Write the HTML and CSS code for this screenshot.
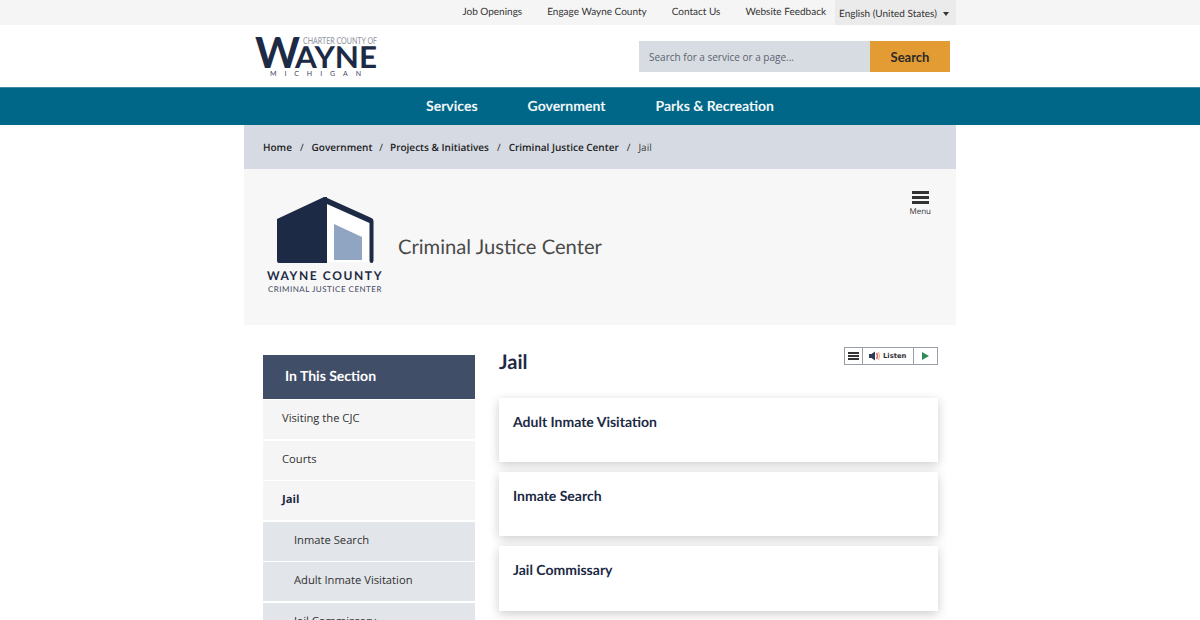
FILE: index.html
```html
<!DOCTYPE html>
<html>

<head>
    <title>Jail</title>
    <meta name="viewport" content="width=device-width, initial-scale=1.0">
    <link rel="stylesheet" href="styles.css">
</head>

<body>
    <div class="topbar">
        <div class="wrap topbar-inner">
            <a href="#">Job Openings</a>
            <a href="#">Engage Wayne County</a>
            <a href="#">Contact Us</a>
            <a href="#">Website Feedback</a>
            <div class="lang">English (United States) <span class="caret"></span></div>
        </div>
    </div>

    <header class="header">
        <div class="wrap header-inner">
            <svg class="logo" width="124" height="44" viewBox="0 0 124 44">
                <text class="logo-w" x="0" y="33" textLength="45" lengthAdjust="spacingAndGlyphs">W</text>
                <text class="logo-ayne" x="40" y="33" textLength="82" lengthAdjust="spacingAndGlyphs">AYNE</text>
                <text class="logo-charter" x="48" y="9" textLength="74" lengthAdjust="spacingAndGlyphs">CHARTER COUNTY OF</text>
                <text class="logo-michigan" x="15" y="41" textLength="91">MICHIGAN</text>
            </svg>
            <form class="search">
                <input class="search-input" type="text" placeholder="Search for a service or a page...">
                <button class="search-button" type="button">Search</button>
            </form>
        </div>
    </header>

    <nav class="mainnav">
        <a href="#">Services</a>
        <a href="#">Government</a>
        <a href="#">Parks &amp; Recreation</a>
    </nav>

    <div class="wrap">
        <div class="breadcrumb">
            <a href="#">Home</a><span class="sep">/</span>
            <a href="#">Government</a><span class="sep sep-narrow">/</span>
            <a href="#">Projects &amp; Initiatives</a><span class="sep">/</span>
            <a href="#">Criminal Justice Center</a><span class="sep">/</span>
            <span class="current">Jail</span>
        </div>

        <div class="section-head">
            <div class="cjc-logo">
                <svg width="100" height="68" viewBox="0 0 100 68">
                    <path d="M51 7 94 27V65H51Z" fill="#fff" />
                    <path d="M1 22 48 0Q49.500-.5 51 0V66H3Q1 66 1 64Z" fill="#1c2a45" />
                    <path d="M49 0 95.500 21Q97.500 22 97.500 24V63.500Q97.500 66 95.500 66 93.500 66 93.500 63.500V26L51 7Z" fill="#1c2a45" />
                    <path d="M58 27 86 40V63H58Z" fill="#8fa5c2" />
                </svg>
                <div class="cjc-name">WAYNE COUNTY</div>
                <div class="cjc-sub">CRIMINAL JUSTICE CENTER</div>
            </div>
            <div class="section-title">Criminal Justice Center</div>
            <div class="menu-toggle">
                <span class="bars"><i></i><i></i><i></i></span>
                <span>Menu</span>
            </div>
        </div>

        <div class="content">
            <aside class="sidebar">
                <div class="sidebar-title">In This Section</div>
                <a class="side-item" href="#">Visiting the CJC</a>
                <a class="side-item" href="#">Courts</a>
                <a class="side-item active" href="#">Jail</a>
                <a class="side-item sub" href="#">Inmate Search</a>
                <a class="side-item sub" href="#">Adult Inmate Visitation</a>
                <a class="side-item sub" href="#">Jail Commissary</a>
            </aside>

            <main class="main">
                <div class="main-head">
                    <h1>Jail</h1>
                    <div class="listen">
                        <span class="listen-menu"><i></i><i></i><i></i></span>
                        <span class="listen-label">
                            <svg width="12" height="10" viewBox="0 0 12 10">
                                <path d="M0 3H2.500L6 .5V9.500L2.500 7H0Z" fill="#2f3a55" />
                                <path d="M7.500 2Q9.500 5 7.500 8" fill="none" stroke="#d9705f" stroke-width="1.400" />
                                <path d="M9.500 1Q11.500 5 9.500 9" fill="none" stroke="#e9a58f" stroke-width="1" />
                            </svg>
                            Listen
                        </span>
                        <span class="listen-play"></span>
                    </div>
                </div>
                <div class="card">Adult Inmate Visitation</div>
                <div class="card">Inmate Search</div>
                <div class="card">Jail Commissary</div>
            </main>
        </div>
    </div>
</body>

</html>
```

FILE: styles.css
```css
html, body {
    height: 620px;
    overflow: hidden;
}

body {
    font-family: 'Lato', sans-serif;
    text-rendering: geometricPrecision;
    background-color: #fff;
    color: #1c2a45;
    margin: 0;
}

a {
    color: inherit;
    text-decoration: none;
}

.wrap {
    width: 712px;
    margin: 0 auto;
}

.topbar {
    background-color: #f5f5f5;
    height: 25px;
}

.topbar-inner {
    display: flex;
    justify-content: flex-end;
    align-items: center;
    height: 25px;
    font-size: 10px;
    color: #333;
}

.topbar-inner a {
    margin-right: 25px;
    padding-bottom: 2px;
}

.topbar-inner a:nth-child(4) {
    margin-right: 9px;
}

.lang {
    display: flex;
    align-items: center;
    height: 25px;
    width: 121px;
    padding: 2px 0 0 4px;
    box-sizing: border-box;
    background-color: #ebebeb;
    font-size: 10px;
    white-space: nowrap;
}

.caret {
    margin-left: 6px;
    border-left: 3.500px solid transparent;
    border-right: 3.500px solid transparent;
    border-top: 4px solid #333;
}

.header-inner {
    display: flex;
    justify-content: space-between;
    align-items: flex-start;
    height: 62px;
}

.logo {
    display: block;
    margin: 10px 0 0 11px;
}

.logo text {
    font-family: 'Lato', sans-serif;
}

.logo-w,
.logo-ayne {
    fill: #1c2a45;
    font-weight: 700;
}

.logo-w {
    font-size: 43px;
}

.logo-ayne {
    font-size: 30px;
}

.logo-charter {
    fill: #8b8f99;
    font-size: 9.500px;
}

.logo-michigan {
    fill: #3c4660;
    font-size: 7px;
}

.search {
    display: flex;
    margin: 16px 6px 0 0;
}

.search-input {
    width: 231px;
    height: 31px;
    padding: 0 10px;
    box-sizing: border-box;
    border: none;
    background-color: #d7dbe2;
    font-family: 'Open Sans', sans-serif;
    font-size: 10px;
}

.search-input::placeholder {
    color: #5c6370;
    opacity: 1;
}

.search-button {
    width: 80px;
    height: 31px;
    border: none;
    background-color: #e39b33;
    color: #2b2b2b;
    font-family: 'Lato', sans-serif;
    font-size: 13px;
    font-weight: 700;
}

.mainnav {
    display: flex;
    justify-content: center;
    gap: 50px;
    align-items: center;
    height: 35px;
    padding-bottom: 2px;
    border-top: 1px solid #3f8aa3;
    background-color: #006789;
    color: #f2f7f9;
    font-size: 14px;
    font-weight: 700;
}

.breadcrumb {
    display: flex;
    align-items: center;
    height: 44px;
    padding-left: 19px;
    background-color: #d6dae2;
    font-family: 'Open Sans', sans-serif;
    font-size: 10px;
    font-weight: 600;
    color: #222;
}

.sep {
    margin: 0 8px;
    font-weight: 400;
}

.sep-narrow {
    margin: 0 7px;
}

.current {
    font-weight: 400;
    color: #444;
}

.section-head {
    display: flex;
    align-items: center;
    position: relative;
    height: 156px;
    background-color: #f7f7f7;
}

.cjc-logo {
    width: 154px;
    padding: 0 0 4px 8px;
    box-sizing: border-box;
    text-align: center;
    white-space: nowrap;
}

.cjc-logo svg {
    display: block;
    margin: 0 0 0 24px;
}

.cjc-name {
    margin-top: 3px;
    font-size: 12px;
    font-weight: 700;
    letter-spacing: 1.600px;
    color: #1c2a45;
}

.cjc-sub {
    margin-top: 1px;
    font-size: 8px;
    letter-spacing: .5px;
    color: #3c4660;
}

.section-title {
    font-size: 20.200px;
    color: #4a4a4a;
}

.menu-toggle {
    position: absolute;
    top: 22px;
    right: 25px;
    display: flex;
    flex-direction: column;
    align-items: center;
    font-family: 'Open Sans', sans-serif;
    font-size: 8px;
    line-height: 10px;
    color: #333;
}

.bars {
    display: flex;
    flex-direction: column;
    gap: 2px;
    width: 17px;
    margin-bottom: 3px;
}

.bars i {
    display: block;
    height: 3px;
    background-color: #333;
}

.content {
    display: flex;
    padding: 30px 18px 0 19px;
    gap: 24px;
}

.sidebar {
    width: 212px;
    flex-shrink: 0;
}

.sidebar-title {
    height: 44px;
    line-height: 41px;
    padding-left: 22px;
    margin-bottom: 1px;
    background-color: #414e68;
    color: #fff;
    font-size: 14px;
    font-weight: 700;
}

.side-item {
    display: block;
    height: 39px;
    line-height: 38px;
    padding-left: 19px;
    margin-bottom: 1.500px;
    background-color: #f5f5f5;
    font-family: 'Open Sans', sans-serif;
    font-size: 11.200px;
    color: #333;
}

.side-item.active {
    font-weight: 700;
    color: #1c2a45;
}

.side-item.sub {
    padding-left: 31px;
    background-color: #e2e5ea;
}

.main {
    flex: 1;
}

.main-head {
    display: flex;
    justify-content: space-between;
    align-items: flex-start;
    height: 42.500px;
}

h1 {
    margin: -5px 0 0;
    font-size: 20px;
    font-weight: 700;
    color: #1c2a45;
}

.listen {
    display: flex;
    height: 16px;
    margin-top: -8px;
    border: 1px solid #9aa0a8;
    background-color: #fff;
}

.listen-menu {
    display: flex;
    flex-direction: column;
    justify-content: center;
    gap: 1px;
    width: 18px;
    padding: 0 3px;
    box-sizing: border-box;
    border-right: 1px solid #9aa0a8;
}

.listen-menu i {
    display: block;
    height: 2px;
    background-color: #333;
}

.listen-label {
    display: flex;
    align-items: center;
    gap: 2px;
    width: 51px;
    padding-left: 6px;
    box-sizing: border-box;
    border-right: 1px solid #9aa0a8;
    font-family: 'DejaVu Sans', sans-serif;
    font-size: 6.800px;
    font-weight: 700;
    color: #333;
}

.listen-play {
    position: relative;
    width: 23px;
}

.listen-play::after {
    content: "";
    position: absolute;
    left: 8px;
    top: 4px;
    border-left: 7px solid #2f8a54;
    border-top: 4px solid transparent;
    border-bottom: 4px solid transparent;
}

.card {
    height: 64.500px;
    margin-bottom: 9.800px;
    padding: 15px 14px 0;
    box-sizing: border-box;
    background-color: #fff;
    box-shadow: 0 3px 10px rgba(0, 0, 0, 0.2);
    font-size: 14px;
    font-weight: 700;
    color: #1c2a45;
}
```
